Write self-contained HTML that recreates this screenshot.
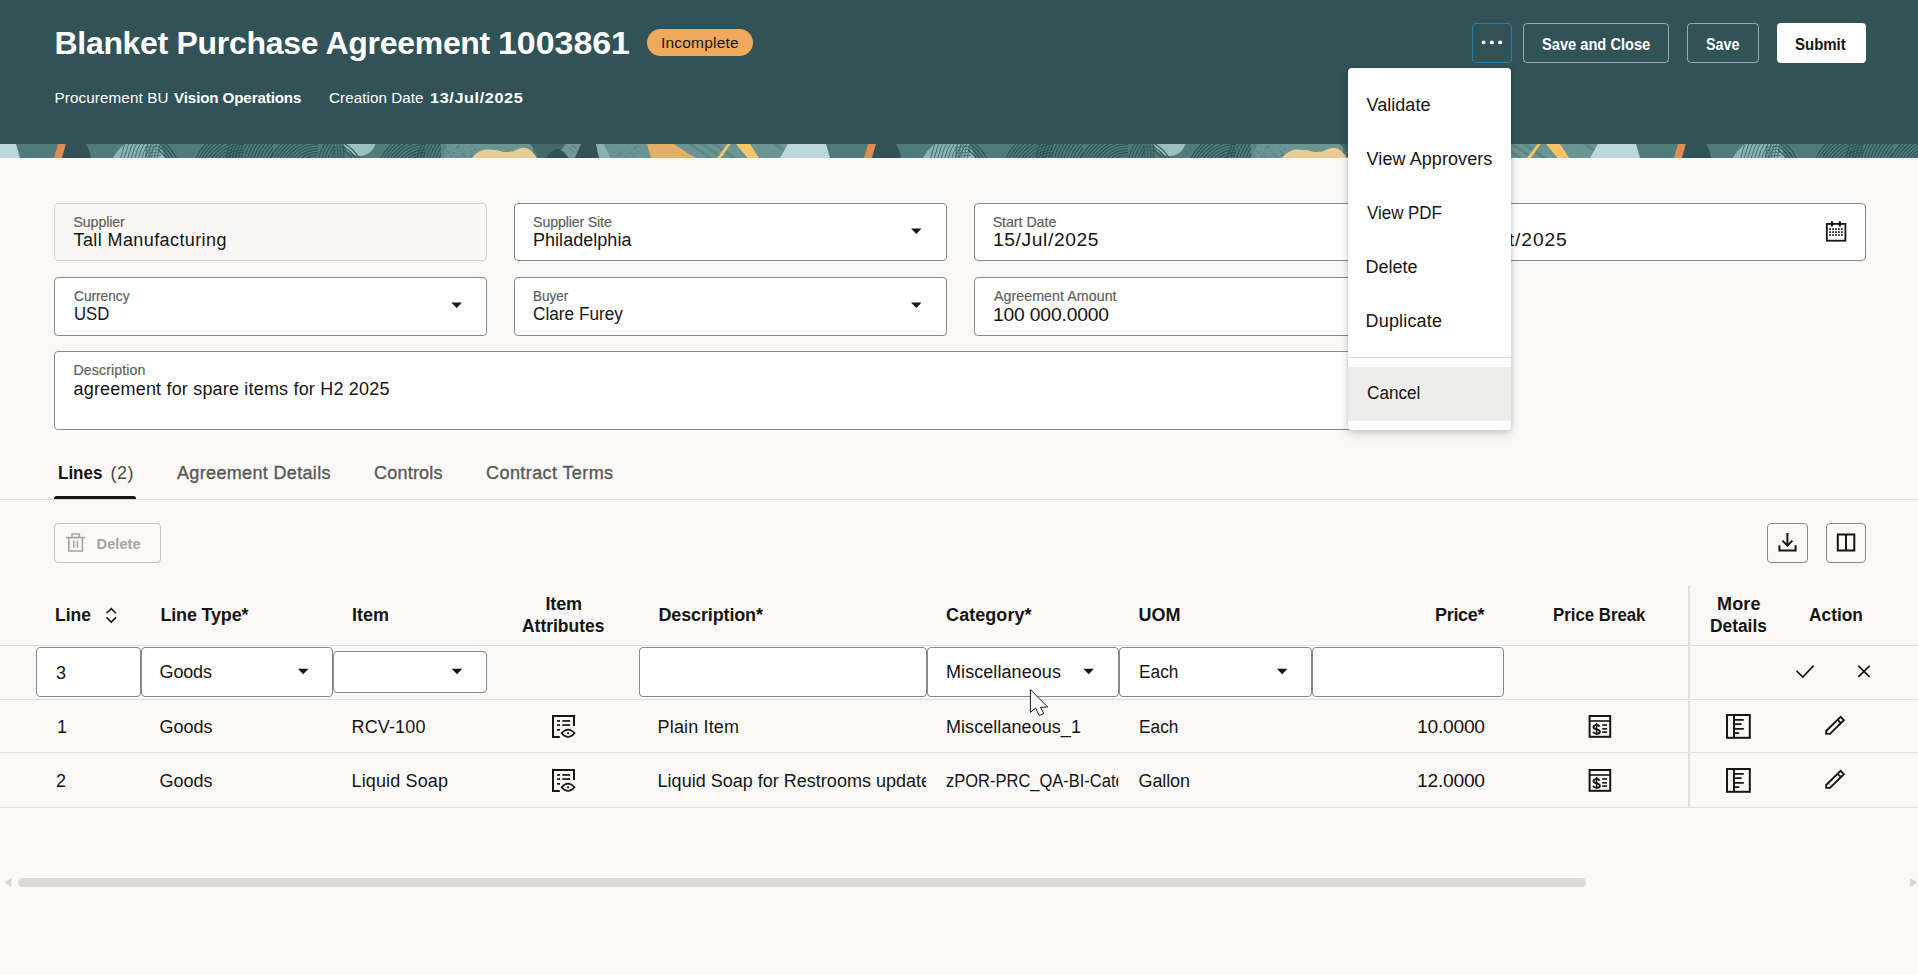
<!DOCTYPE html>
<html><head><meta charset="utf-8"><title>Blanket Purchase Agreement 1003861</title>
<style>

html,body{margin:0;padding:0;}
body{width:1918px;height:975px;overflow:hidden;background:#fbf9f8;font-family:"Liberation Sans",sans-serif;position:relative;color:#161513;}
.a{position:absolute;box-sizing:border-box;}
.t{position:absolute;white-space:nowrap;display:block;z-index:2;}
.hdr{left:0;top:0;width:1918px;height:144px;background:#315357;}
.strip{left:0;top:144px;width:1918px;height:14px;overflow:hidden;}
.fld{border:1px solid #8a8885;border-radius:4px;background:#ffffff;}
.fld.ro{border-color:#d6d4d1;background:#f9f8f6;}
.btn{border:1px solid #8a8885;border-radius:4px;}
.hl{height:1px;background:#dfddda;left:0;width:1918px;}
.menu{left:1347.5px;top:68px;width:163.5px;height:362px;background:#ffffff;border-radius:4px 4px 3px 3px;box-shadow:0 4px 10px rgba(0,0,0,0.18),0 0 4px rgba(0,0,0,0.10);z-index:5;}
svg{position:absolute;overflow:visible;}
svg.clip{overflow:hidden;}

</style></head>
<body>
<div class="a hdr"></div>
<svg class="a clip" style="left:0;top:144px" width="1918" height="14" viewBox="0 0 1918 14"><defs>
<clipPath id="cpA"><path d="M125 0 L160 0 L165 14 L113 14 Q117 6 125 0 Z"/></clipPath>
<clipPath id="cpB"><rect x="158" y="0" width="24" height="14"/></clipPath>
<clipPath id="cpC1"><rect x="190" y="0" width="53" height="14"/></clipPath>
<clipPath id="cpC2"><rect x="226" y="0" width="47" height="14"/></clipPath>
<clipPath id="cpD1"><rect x="265" y="0" width="53" height="14"/></clipPath>
<clipPath id="cpD2"><rect x="314" y="0" width="20" height="14"/></clipPath>
<clipPath id="cpE"><rect x="343" y="0" width="26" height="14"/></clipPath>
<clipPath id="cpF1"><rect x="379" y="0" width="46" height="14"/></clipPath>
<clipPath id="cpF2"><rect x="412" y="0" width="29" height="14"/></clipPath>
<clipPath id="cpG"><path d="M674 0 L788 0 L781 14 L696 14 Z"/></clipPath>
</defs><g id="tile"><rect x="0" y="0" width="810" height="14" fill="#517b7a"/>
<path d="M-22 0 L16 0 L20 14 L-30 14 Z" fill="#bdd6d9"/>
<path d="M58 0 L66 0 L62 14 L54 14 Z" fill="#e28b52"/>
<path d="M66 0 L86 0 Q90 6 91 14 L62 14 Z" fill="#315358"/>
<path d="M125 0 L160 0 L165 14 L113 14 Q117 6 125 0 Z" fill="#8db4b2"/>
<g fill="none" stroke="#356063" stroke-width="0.9" opacity="0.95" clip-path="url(#cpA)"><circle cx="187" cy="26" r="40.0"/><circle cx="187" cy="26" r="43.4"/><circle cx="187" cy="26" r="46.8"/><circle cx="187" cy="26" r="50.2"/><circle cx="187" cy="26" r="53.6"/><circle cx="187" cy="26" r="57.0"/><circle cx="187" cy="26" r="60.4"/><circle cx="187" cy="26" r="63.8"/><circle cx="187" cy="26" r="67.2"/></g>
<g fill="none" stroke="#356063" stroke-width="0.8" opacity="0.9"><path d="M147.7 0 L145.3 14"/><path d="M150.7 0 L148.3 14"/><path d="M153.7 0 L151.3 14"/><path d="M156.7 0 L154.3 14"/><path d="M159.7 0 L157.3 14"/><path d="M145 3.5 L161 2.0"/><path d="M145 6.5 L161 5.0"/><path d="M145 9.5 L161 8.0"/><path d="M145 12.5 L161 11.0"/></g>
<g fill="none" stroke="#2d5154" stroke-width="1.1" opacity="0.95" clip-path="url(#cpB)"><circle cx="140" cy="31" r="31.0"/><circle cx="140" cy="31" r="34.0"/><circle cx="140" cy="31" r="37.0"/><circle cx="140" cy="31" r="40.0"/></g>
<g fill="none" stroke="#2d5154" stroke-width="1.1" opacity="0.95" clip-path="url(#cpC1)"><circle cx="243" cy="36" r="22.0"/><circle cx="243" cy="36" r="24.7"/><circle cx="243" cy="36" r="27.4"/><circle cx="243" cy="36" r="30.1"/><circle cx="243" cy="36" r="32.8"/><circle cx="243" cy="36" r="35.5"/><circle cx="243" cy="36" r="38.2"/><circle cx="243" cy="36" r="40.9"/><circle cx="243" cy="36" r="43.6"/><circle cx="243" cy="36" r="46.3"/><circle cx="243" cy="36" r="49.0"/><circle cx="243" cy="36" r="51.7"/></g>
<g fill="none" stroke="#2d5154" stroke-width="1.1" opacity="0.95" clip-path="url(#cpC2)"><circle cx="300" cy="28" r="30.0"/><circle cx="300" cy="28" r="33.0"/><circle cx="300" cy="28" r="36.0"/><circle cx="300" cy="28" r="39.0"/><circle cx="300" cy="28" r="42.0"/><circle cx="300" cy="28" r="45.0"/><circle cx="300" cy="28" r="48.0"/><circle cx="300" cy="28" r="51.0"/><circle cx="300" cy="28" r="54.0"/><circle cx="300" cy="28" r="57.0"/><circle cx="300" cy="28" r="60.0"/><circle cx="300" cy="28" r="63.0"/><circle cx="300" cy="28" r="66.0"/><circle cx="300" cy="28" r="69.0"/><circle cx="300" cy="28" r="72.0"/><circle cx="300" cy="28" r="75.0"/></g>
<g fill="none" stroke="#2d5154" stroke-width="1.1" opacity="0.95" clip-path="url(#cpD1)"><circle cx="318" cy="36" r="22.0"/><circle cx="318" cy="36" r="24.7"/><circle cx="318" cy="36" r="27.4"/><circle cx="318" cy="36" r="30.1"/><circle cx="318" cy="36" r="32.8"/><circle cx="318" cy="36" r="35.5"/><circle cx="318" cy="36" r="38.2"/><circle cx="318" cy="36" r="40.9"/><circle cx="318" cy="36" r="43.6"/><circle cx="318" cy="36" r="46.3"/><circle cx="318" cy="36" r="49.0"/><circle cx="318" cy="36" r="51.7"/></g>
<g fill="none" stroke="#2d5154" stroke-width="1.1" opacity="0.95" clip-path="url(#cpD2)"><circle cx="372" cy="28" r="40.0"/><circle cx="372" cy="28" r="43.0"/><circle cx="372" cy="28" r="46.0"/><circle cx="372" cy="28" r="49.0"/><circle cx="372" cy="28" r="52.0"/><circle cx="372" cy="28" r="55.0"/></g>
<g fill="none" stroke="#2f5558" stroke-width="0.8" opacity="0.9"><path d="M334 0 L335 14"/><path d="M337 0 L338 14"/><path d="M340 0 L341 14"/><path d="M343 0 L344 14"/><path d="M332.5 3 L345 3"/><path d="M332.5 6.5 L345 6.5"/><path d="M332.5 10 L345 10"/><path d="M332.5 13 L345 13"/></g>
<circle cx="359.5" cy="-4.5" r="16.5" fill="#9bc0be"/>
<g fill="none" stroke="#2d5154" stroke-width="1.1" opacity="0.95" clip-path="url(#cpE)"><circle cx="326" cy="33" r="32.0"/><circle cx="326" cy="33" r="35.0"/><circle cx="326" cy="33" r="38.0"/></g>
<g fill="none" stroke="#2d5154" stroke-width="1.1" opacity="0.95" clip-path="url(#cpF1)"><circle cx="425" cy="36" r="22.0"/><circle cx="425" cy="36" r="24.7"/><circle cx="425" cy="36" r="27.4"/><circle cx="425" cy="36" r="30.1"/><circle cx="425" cy="36" r="32.8"/><circle cx="425" cy="36" r="35.5"/><circle cx="425" cy="36" r="38.2"/><circle cx="425" cy="36" r="40.9"/><circle cx="425" cy="36" r="43.6"/><circle cx="425" cy="36" r="46.3"/><circle cx="425" cy="36" r="49.0"/></g>
<g fill="none" stroke="#2d5154" stroke-width="1.1" opacity="0.95" clip-path="url(#cpF2)"><circle cx="480" cy="28" r="40.0"/><circle cx="480" cy="28" r="43.0"/><circle cx="480" cy="28" r="46.0"/><circle cx="480" cy="28" r="49.0"/><circle cx="480" cy="28" r="52.0"/><circle cx="480" cy="28" r="55.0"/><circle cx="480" cy="28" r="58.0"/><circle cx="480" cy="28" r="61.0"/><circle cx="480" cy="28" r="64.0"/></g>
<rect x="441" y="0" width="92" height="14" fill="#6a9593"/>
<path d="M441 0 L447 0 L443 14 L441 14Z" fill="#5c8988"/>
<g fill="#5a8684"><circle cx="450.6" cy="2.2" r="0.6"/><circle cx="448.0" cy="1.8" r="0.6"/><circle cx="472.4" cy="10.6" r="0.9"/><circle cx="450.1" cy="7.4" r="0.6"/><circle cx="448.5" cy="2.3" r="0.5"/><circle cx="472.7" cy="10.9" r="0.9"/><circle cx="468.6" cy="3.3" r="0.6"/><circle cx="463.1" cy="9.8" r="0.9"/><circle cx="471.2" cy="2.0" r="0.8"/><circle cx="464.5" cy="7.1" r="0.5"/><circle cx="458.2" cy="2.1" r="1.0"/><circle cx="470.7" cy="7.6" r="0.6"/><circle cx="472.1" cy="7.9" r="0.9"/><circle cx="470.1" cy="7.1" r="0.6"/><circle cx="462.2" cy="6.2" r="0.5"/><circle cx="452.8" cy="10.8" r="0.4"/><circle cx="444.5" cy="8.5" r="0.6"/><circle cx="460.1" cy="6.7" r="0.6"/><circle cx="474.9" cy="3.3" r="0.6"/><circle cx="449.5" cy="8.6" r="0.6"/><circle cx="454.4" cy="10.0" r="0.6"/><circle cx="460.9" cy="11.9" r="0.5"/><circle cx="445.0" cy="3.7" r="0.9"/><circle cx="462.7" cy="3.8" r="0.6"/><circle cx="448.7" cy="6.5" r="0.4"/><circle cx="465.3" cy="11.8" r="1.0"/><circle cx="466.5" cy="12.5" r="0.4"/><circle cx="452.2" cy="12.6" r="0.9"/><circle cx="456.1" cy="12.3" r="0.8"/><circle cx="469.2" cy="4.5" r="0.5"/><circle cx="457.2" cy="2.6" r="0.6"/><circle cx="473.8" cy="5.0" r="0.4"/><circle cx="444.4" cy="3.0" r="0.9"/><circle cx="454.6" cy="4.5" r="0.5"/><circle cx="474.4" cy="6.1" r="0.5"/><circle cx="444.9" cy="1.7" r="0.5"/><circle cx="464.7" cy="2.8" r="0.4"/><circle cx="458.7" cy="4.0" r="1.0"/><circle cx="446.9" cy="7.4" r="0.9"/><circle cx="456.1" cy="12.9" r="0.7"/><circle cx="450.7" cy="5.9" r="0.4"/><circle cx="456.5" cy="4.0" r="0.9"/><circle cx="469.6" cy="7.0" r="0.4"/><circle cx="451.1" cy="3.9" r="0.5"/><circle cx="450.4" cy="11.4" r="0.5"/><circle cx="444.6" cy="12.1" r="0.7"/><circle cx="474.7" cy="5.8" r="0.9"/><circle cx="463.9" cy="10.5" r="0.8"/><circle cx="458.8" cy="2.1" r="0.5"/><circle cx="471.0" cy="11.8" r="1.0"/><circle cx="453.8" cy="8.9" r="0.9"/><circle cx="463.6" cy="10.8" r="0.7"/><circle cx="464.0" cy="9.2" r="0.6"/><circle cx="472.5" cy="12.5" r="0.4"/><circle cx="474.1" cy="12.5" r="0.8"/><circle cx="444.4" cy="11.8" r="0.5"/><circle cx="474.0" cy="9.0" r="0.4"/><circle cx="448.4" cy="8.6" r="0.7"/><circle cx="466.9" cy="12.1" r="0.5"/><circle cx="443.1" cy="12.1" r="0.4"/></g>
<path d="M472 14 Q478 6.5 486 5.6 Q496 5.4 504 8 Q512 8.6 516 6 Q521 3.4 525 3.8 Q531 5 537 14 Z" fill="#ebcb95"/>
<path d="M530 0 L566 0 Q560 10 545 14 L538 14 Q536 6 530 0Z" fill="#416968"/>
<path d="M546 14 Q552 5 557.5 5 Q562 5 569 14 Z" fill="#315358"/>
<path d="M566 0 L581 0 L575 14 L569 14 Q563 5.5 560.5 6.5 Q564 3 566 0Z" fill="#6f9896"/>
<path d="M571 1 L576 4 M569 4 L574 8" stroke="#5c8886" stroke-width="1.6" fill="none"/>
<path d="M581 0 L596 0 L599 14 L575 14 Z" fill="#315358"/>
<path d="M596 0 L604 0 L611 14 L599 14 Z" fill="#88b1af"/>
<path d="M604 0 L647 0 L651 14 L611 14 Z" fill="#6a9593"/>
<g fill="#5b8786"><circle cx="636.3" cy="2.4" r="0.8"/><circle cx="633.5" cy="11.5" r="0.7"/><circle cx="636.4" cy="3.4" r="0.7"/><circle cx="619.9" cy="11.7" r="0.8"/><circle cx="624.1" cy="7.3" r="0.4"/><circle cx="611.0" cy="8.1" r="0.6"/><circle cx="635.9" cy="8.3" r="0.5"/><circle cx="620.9" cy="10.2" r="0.7"/><circle cx="610.3" cy="11.1" r="0.8"/><circle cx="612.6" cy="7.5" r="0.6"/><circle cx="633.6" cy="4.7" r="0.5"/><circle cx="624.6" cy="12.6" r="0.4"/><circle cx="613.4" cy="8.5" r="0.8"/><circle cx="625.4" cy="6.2" r="0.8"/><circle cx="633.3" cy="1.8" r="0.8"/><circle cx="615.9" cy="4.6" r="0.8"/><circle cx="622.7" cy="10.6" r="0.5"/><circle cx="636.2" cy="3.1" r="0.5"/><circle cx="624.8" cy="5.1" r="0.7"/><circle cx="637.1" cy="9.5" r="0.4"/><circle cx="619.4" cy="7.5" r="0.6"/><circle cx="631.5" cy="6.8" r="0.4"/><circle cx="617.4" cy="11.2" r="0.6"/><circle cx="633.0" cy="12.8" r="0.7"/><circle cx="630.3" cy="8.3" r="0.6"/><circle cx="637.4" cy="6.6" r="0.9"/><circle cx="619.2" cy="11.4" r="0.8"/><circle cx="628.4" cy="6.3" r="0.5"/><circle cx="633.1" cy="5.3" r="0.7"/><circle cx="614.0" cy="2.0" r="0.5"/><circle cx="634.3" cy="3.1" r="0.9"/><circle cx="621.2" cy="7.9" r="0.6"/><circle cx="628.6" cy="2.1" r="0.6"/><circle cx="638.1" cy="3.2" r="0.7"/><circle cx="619.8" cy="4.6" r="0.4"/><circle cx="610.6" cy="12.4" r="0.8"/><circle cx="634.0" cy="10.7" r="0.9"/><circle cx="614.8" cy="8.0" r="0.6"/><circle cx="627.2" cy="12.3" r="0.8"/><circle cx="639.1" cy="2.4" r="0.7"/><circle cx="630.3" cy="9.9" r="0.7"/><circle cx="634.9" cy="4.6" r="0.9"/><circle cx="622.2" cy="8.2" r="0.8"/><circle cx="631.1" cy="4.7" r="0.5"/><circle cx="619.8" cy="8.5" r="0.9"/><circle cx="637.0" cy="5.8" r="0.6"/><circle cx="634.5" cy="4.4" r="0.6"/><circle cx="610.4" cy="3.2" r="0.7"/><circle cx="630.8" cy="8.4" r="0.6"/><circle cx="638.5" cy="8.5" r="0.5"/></g>
<path d="M647 0 L674 0 L696 14 L651 14 Z" fill="#e2b065"/>
<path d="M674 0 L788 0 L781 14 L696 14 Z" fill="#6a9593"/>
<g fill="#5a8785" clip-path="url(#cpG)"><path d="M688 0 L708 14 L713 14 L693 0Z"/><path d="M700 0 L720 14 L725 14 L705 0Z"/><path d="M712 0 L732 14 L737 14 L717 0Z"/><path d="M735 0 L755 14 L760 14 L740 0Z"/><path d="M772 0 L792 14 L797 14 L777 0Z"/></g>
<path d="M727.5 0 L730.6 0 L721 14 L717 14 Z" fill="#f5c567"/>
<path d="M736 0 L750 0 L759 14 L747.5 14 Z" fill="#f5c567"/>
<path d="M788 0 L826 0 L830 14 L780.6 14 Z" fill="#bdd6d9"/></g><use href="#tile" x="810"/><use href="#tile" x="1620"/></svg>
<div class="a" style="left:647px;top:29px;width:105.5px;height:27px;border-radius:14px;background:#f0a95b;"></div>
<div class="a" style="left:1472px;top:23px;width:40px;height:40px;border:1px solid #2a7fb0;border-radius:4px;"></div>
<svg class="a" style="left:0;top:0" width="1" height="1"><g fill="#ffffff"><circle cx="1483.6" cy="42.4" r="1.95"/><circle cx="1491.9" cy="42.4" r="1.95"/><circle cx="1500.1" cy="42.4" r="1.95"/></g></svg>
<div class="a" style="left:1523px;top:23px;width:146px;height:40px;border:1px solid rgba(255,255,255,0.5);border-radius:4px;"></div>
<div class="a" style="left:1687px;top:23px;width:72px;height:40px;border:1px solid rgba(255,255,255,0.5);border-radius:4px;"></div>
<div class="a" style="left:1777px;top:23px;width:89px;height:40px;background:#ffffff;border-radius:4px;"></div>
<div class="a fld ro" style="left:54px;top:203px;width:433px;height:58px;"></div>
<div class="a fld" style="left:514px;top:203px;width:433px;height:58px;"></div>
<div class="a fld" style="left:974px;top:203px;width:433px;height:58px;"></div>
<div class="a fld" style="left:1434px;top:203px;width:432px;height:58px;"></div>
<div class="a fld" style="left:54px;top:277px;width:433px;height:59px;"></div>
<div class="a fld" style="left:514px;top:277px;width:433px;height:59px;"></div>
<div class="a fld" style="left:974px;top:277px;width:433px;height:59px;"></div>
<div class="a fld" style="left:54px;top:351px;width:1353px;height:79px;"></div>
<svg class="a" style="left:0;top:0;z-index:2" width="1" height="1"><path d="M451.30 302.50 L461.90 302.50 L456.60 307.90 Z" fill="#161513"/></svg>
<svg class="a" style="left:0;top:0;z-index:2" width="1" height="1"><path d="M911.00 302.50 L921.60 302.50 L916.30 307.90 Z" fill="#161513"/></svg>
<svg class="a" style="left:0;top:0;z-index:2" width="1" height="1"><path d="M911.00 228.50 L921.60 228.50 L916.30 233.90 Z" fill="#161513"/></svg>
<svg class="a" style="left:0;top:0;z-index:2" width="1" height="1"><rect x="1826.8" y="223.9" width="18.6" height="16.8" fill="none" stroke="#161513" stroke-width="1.8"/><path d="M1832 221.2 V226.4 M1839.8 221.2 V226.4" stroke="#161513" stroke-width="2.2" fill="none"/><rect x="1829.25" y="228.25" width="1.7" height="1.7" fill="#161513"/><rect x="1829.25" y="231.25" width="1.7" height="1.7" fill="#161513"/><rect x="1829.25" y="234.15" width="1.7" height="1.7" fill="#161513"/><rect x="1832.20" y="228.25" width="1.7" height="1.7" fill="#161513"/><rect x="1832.20" y="231.25" width="1.7" height="1.7" fill="#161513"/><rect x="1832.20" y="234.15" width="1.7" height="1.7" fill="#161513"/><rect x="1835.10" y="228.25" width="1.7" height="1.7" fill="#161513"/><rect x="1835.10" y="231.25" width="1.7" height="1.7" fill="#161513"/><rect x="1835.10" y="234.15" width="1.7" height="1.7" fill="#161513"/><rect x="1838.05" y="228.25" width="1.7" height="1.7" fill="#161513"/><rect x="1838.05" y="231.25" width="1.7" height="1.7" fill="#161513"/><rect x="1838.05" y="234.15" width="1.7" height="1.7" fill="#161513"/><rect x="1840.95" y="228.25" width="1.7" height="1.7" fill="#161513"/><rect x="1840.95" y="231.25" width="1.7" height="1.7" fill="#161513"/><rect x="1840.95" y="234.15" width="1.7" height="1.7" fill="#161513"/></svg>
<div class="a menu"><div class="a" style="left:0;top:289px;width:163.5px;height:1px;background:#dcdad7;"></div><div class="a" style="left:0;top:299px;width:163.5px;height:54px;background:#ededec;"></div></div>
<div class="a hl" style="top:499px;background:#d9d7d4;"></div>
<div class="a" style="left:54px;top:496px;width:82px;height:3px;background:#161513;border-radius:2.5px 2.5px 0 0;"></div>
<div class="a btn" style="left:54px;top:523px;width:107px;height:40px;border-color:#c5c3c0;"></div>
<svg class="a" style="left:0;top:0" width="1" height="1"><g fill="none" stroke="#a5a3a0" stroke-width="1.6"><path d="M66 537.6 H85"/><path d="M72 537.4 V534 H79.3 V537.4"/><path d="M68.8 538 V551 H82.4 V538"/><path d="M73.8 540.4 V547.8 M77.4 540.4 V547.8"/></g></svg>
<div class="a btn" style="left:1767px;top:523px;width:41px;height:40px;"></div>
<div class="a btn" style="left:1826px;top:523px;width:40px;height:40px;"></div>
<svg class="a" style="left:0;top:0" width="1" height="1"><g fill="none" stroke="#161513" stroke-width="2"><path d="M1787.4 533 V545.4"/><path d="M1782.4 540.6 L1787.4 545.6 L1792.4 540.6"/><path d="M1779.4 545.2 V550.4 H1795.6 V545.2"/><rect x="1837.8" y="534.5" width="16.5" height="16"/><path d="M1846 534.5 V550.5"/></g></svg>
<div class="a hl" style="top:645px;"></div>
<div class="a hl" style="top:699px;"></div>
<div class="a hl" style="top:752px;"></div>
<div class="a hl" style="top:807px;"></div>
<div class="a" style="left:1688px;top:586px;width:2px;height:221px;background:#e2e0dd;"></div>
<svg class="a" style="left:0;top:0" width="1" height="1"><g fill="none" stroke="#161513" stroke-width="1.5"><path d="M106.5 613.3 L111.3 608.6 L116.1 613.3"/><path d="M106.5 617.4 L111.3 622.1 L116.1 617.4"/></g></svg>
<div class="a fld" style="left:36px;top:647px;width:105px;height:50px;"></div>
<div class="a fld" style="left:141px;top:647px;width:192px;height:50px;"></div>
<div class="a fld" style="left:333px;top:651px;width:154px;height:42px;"></div>
<div class="a fld" style="left:639px;top:647px;width:288px;height:50px;"></div>
<div class="a fld" style="left:927px;top:647px;width:192px;height:50px;"></div>
<div class="a fld" style="left:1119px;top:647px;width:193px;height:50px;"></div>
<div class="a fld" style="left:1312px;top:647px;width:192px;height:50px;"></div>
<svg class="a" style="left:0;top:0;z-index:2" width="1" height="1"><path d="M297.90 668.80 L308.50 668.80 L303.20 674.20 Z" fill="#161513"/></svg>
<svg class="a" style="left:0;top:0;z-index:2" width="1" height="1"><path d="M451.70 668.80 L462.30 668.80 L457.00 674.20 Z" fill="#161513"/></svg>
<svg class="a" style="left:0;top:0;z-index:2" width="1" height="1"><path d="M1083.40 668.80 L1094.00 668.80 L1088.70 674.20 Z" fill="#161513"/></svg>
<svg class="a" style="left:0;top:0;z-index:2" width="1" height="1"><path d="M1276.90 668.80 L1287.50 668.80 L1282.20 674.20 Z" fill="#161513"/></svg>
<svg class="a" style="left:0;top:0" width="1" height="1"><g fill="none" stroke="#161513" stroke-width="1.7"><path d="M1796.5 670.8 L1802.8 677 L1813.6 665.7"/><path d="M1858.3 665.9 L1869.6 676.9 M1869.6 665.9 L1858.3 676.9"/></g></svg>
<svg class="a" style="left:0;top:0" width="1" height="1"><g transform="translate(0,0)"><path d="M559.8 737 H553 V716 H574 V726" fill="none" stroke="#161513" stroke-width="2"/><g fill="#161513"><rect x="557" y="720.1" width="3" height="1.7"/><rect x="557" y="724.2" width="3" height="1.7"/><rect x="557" y="729" width="3" height="1.7"/><rect x="562.3" y="720.1" width="7.8" height="1.7"/><rect x="562.3" y="724.2" width="7.8" height="1.7"/></g><path d="M561.6 733.3 Q568 726 574.6 733.3 Q568 740.6 561.6 733.3 Z" fill="none" stroke="#161513" stroke-width="1.6"/><circle cx="568.1" cy="733.3" r="1.1" fill="#161513"/></g></svg>
<svg class="a" style="left:0;top:0" width="1" height="1"><g transform="translate(0,0)"><rect x="1589.6" y="716" width="20.6" height="20.8" fill="none" stroke="#161513" stroke-width="2"/><path d="M1589.6 721 H1610.2" stroke="#161513" stroke-width="1.6" fill="none"/><g fill="#161513"><rect x="1602.2" y="724.2" width="4.9" height="1.6"/><rect x="1602.2" y="728" width="4.9" height="1.6"/><rect x="1602.2" y="731.3" width="4.9" height="1.6"/></g><path d="M1599.7 726.7 C1598.6 724.5 1593.5 724.4 1593.5 727.2 C1593.5 730 1599.9 728.7 1599.9 731.7 C1599.9 734.4 1594.3 734.3 1593.1 731.9" fill="none" stroke="#161513" stroke-width="1.9"/><path d="M1596.6 722.9 V734.7" fill="none" stroke="#161513" stroke-width="1.5"/></g></svg>
<svg class="a" style="left:0;top:0" width="1" height="1"><g transform="translate(0,0)" fill="none" stroke="#161513" stroke-width="2"><rect x="1727" y="715" width="22.8" height="22.8"/><path d="M1734 715 V737.8"/><path d="M1735 719.8 H1743.8 M1735 724.1 H1741.6 M1735 728.8 H1743.8 M1735 733.1 H1739.2" stroke-width="1.8"/></g></svg>
<svg class="a" style="left:0;top:0" width="1" height="1"><g transform="translate(0,0)" fill="none" stroke="#161513" stroke-width="1.85" stroke-linejoin="miter"><path d="M1826.2 733.8 L1826.2 731.0 L1840.6 716.9 L1843.9 720.2 L1830.0 733.8 Z"/><path d="M1837.7 719.9 L1840.9 723.1"/></g></svg>
<svg class="a" style="left:0;top:0" width="1" height="1"><g transform="translate(0,54)"><path d="M559.8 737 H553 V716 H574 V726" fill="none" stroke="#161513" stroke-width="2"/><g fill="#161513"><rect x="557" y="720.1" width="3" height="1.7"/><rect x="557" y="724.2" width="3" height="1.7"/><rect x="557" y="729" width="3" height="1.7"/><rect x="562.3" y="720.1" width="7.8" height="1.7"/><rect x="562.3" y="724.2" width="7.8" height="1.7"/></g><path d="M561.6 733.3 Q568 726 574.6 733.3 Q568 740.6 561.6 733.3 Z" fill="none" stroke="#161513" stroke-width="1.6"/><circle cx="568.1" cy="733.3" r="1.1" fill="#161513"/></g></svg>
<svg class="a" style="left:0;top:0" width="1" height="1"><g transform="translate(0,54)"><rect x="1589.6" y="716" width="20.6" height="20.8" fill="none" stroke="#161513" stroke-width="2"/><path d="M1589.6 721 H1610.2" stroke="#161513" stroke-width="1.6" fill="none"/><g fill="#161513"><rect x="1602.2" y="724.2" width="4.9" height="1.6"/><rect x="1602.2" y="728" width="4.9" height="1.6"/><rect x="1602.2" y="731.3" width="4.9" height="1.6"/></g><path d="M1599.7 726.7 C1598.6 724.5 1593.5 724.4 1593.5 727.2 C1593.5 730 1599.9 728.7 1599.9 731.7 C1599.9 734.4 1594.3 734.3 1593.1 731.9" fill="none" stroke="#161513" stroke-width="1.9"/><path d="M1596.6 722.9 V734.7" fill="none" stroke="#161513" stroke-width="1.5"/></g></svg>
<svg class="a" style="left:0;top:0" width="1" height="1"><g transform="translate(0,54)" fill="none" stroke="#161513" stroke-width="2"><rect x="1727" y="715" width="22.8" height="22.8"/><path d="M1734 715 V737.8"/><path d="M1735 719.8 H1743.8 M1735 724.1 H1741.6 M1735 728.8 H1743.8 M1735 733.1 H1739.2" stroke-width="1.8"/></g></svg>
<svg class="a" style="left:0;top:0" width="1" height="1"><g transform="translate(0,54)" fill="none" stroke="#161513" stroke-width="1.85" stroke-linejoin="miter"><path d="M1826.2 733.8 L1826.2 731.0 L1840.6 716.9 L1843.9 720.2 L1830.0 733.8 Z"/><path d="M1837.7 719.9 L1840.9 723.1"/></g></svg>
<div class="a" style="left:18px;top:878px;width:1567.5px;height:9px;border-radius:4.5px;background:#dcdbd9;"></div>
<svg class="a" style="left:0;top:0" width="1" height="1"><g fill="#d6d5d3" stroke="#d6d5d3" stroke-width="1" stroke-linejoin="round"><path d="M5.2 882.5 L11 878.8 L11 886.2 Z"/><path d="M1916.6 882.5 L1910.4 878.8 L1910.4 886.2 Z"/></g></svg>
<div id="texts">
<span class="t" id="t0" style="left:54.50px;top:23.00px;font-size:32px;line-height:40.0px;color:#ffffff;font-weight:700;letter-spacing:-0.306px;">Blanket Purchase Agreement</span>
<span class="t" id="t1" style="left:498.40px;top:23.00px;font-size:32px;line-height:40.0px;color:#ffffff;font-weight:700;letter-spacing:-0.016px;transform:scaleX(1.0600);transform-origin:0 0;">1003861</span>
<span class="t" id="t2" style="left:661.00px;top:33.00px;font-size:15.5px;line-height:19.38px;color:#161513;letter-spacing:0.198px;">Incomplete</span>
<span class="t" id="t3" style="left:54.46px;top:88.00px;font-size:15.2px;line-height:19.0px;color:#ffffff;letter-spacing:0.134px;">Procurement BU</span>
<span class="t" id="t4" style="left:174.04px;top:88.00px;font-size:15.2px;line-height:19.0px;color:#ffffff;font-weight:700;letter-spacing:-0.142px;">Vision Operations</span>
<span class="t" id="t5" style="left:329.08px;top:88.00px;font-size:15.2px;line-height:19.0px;color:#ffffff;letter-spacing:0.052px;">Creation Date</span>
<span class="t" id="t6" style="left:429.56px;top:88.00px;font-size:15.2px;line-height:19.0px;color:#ffffff;font-weight:700;letter-spacing:0.558px;transform:scaleX(1.0700);transform-origin:0 0;">13/Jul/2025</span>
<span class="t" id="t7" style="left:1542.10px;top:35.00px;font-size:16px;line-height:20.0px;color:#ffffff;font-weight:700;transform:scaleX(0.9153);transform-origin:0 0;">Save and Close</span>
<span class="t" id="t8" style="left:1706.10px;top:35.00px;font-size:16px;line-height:20.0px;color:#ffffff;font-weight:700;transform:scaleX(0.8923);transform-origin:0 0;">Save</span>
<span class="t" id="t9" style="left:1795.16px;top:35.00px;font-size:16px;line-height:20.0px;color:#161513;font-weight:700;transform:scaleX(0.9360);transform-origin:0 0;">Submit</span>
<span class="t" id="t10" style="left:73.56px;top:214.00px;font-size:14.2px;line-height:17.75px;color:#615f5c;letter-spacing:-0.138px;-webkit-text-stroke:0.2px #615f5c;">Supplier</span>
<span class="t" id="t11" style="left:73.56px;top:229.00px;font-size:18px;line-height:22.5px;color:#161513;letter-spacing:0.399px;">Tall Manufacturing</span>
<span class="t" id="t12" style="left:533.10px;top:214.00px;font-size:14.2px;line-height:17.75px;color:#615f5c;letter-spacing:-0.146px;-webkit-text-stroke:0.2px #615f5c;">Supplier Site</span>
<span class="t" id="t13" style="left:533.00px;top:229.00px;font-size:18px;line-height:22.5px;color:#161513;letter-spacing:0.031px;">Philadelphia</span>
<span class="t" id="t14" style="left:992.64px;top:214.00px;font-size:14.2px;line-height:17.75px;color:#615f5c;letter-spacing:-0.025px;-webkit-text-stroke:0.2px #615f5c;">Start Date</span>
<span class="t" id="t15" style="left:992.93px;top:229.00px;font-size:18px;line-height:22.5px;color:#161513;letter-spacing:0.554px;transform:scaleX(1.0700);transform-origin:0 0;">15/Jul/2025</span>
<span class="t" id="t16" style="left:1452.62px;top:214.00px;font-size:14.2px;line-height:17.75px;color:#615f5c;-webkit-text-stroke:0.2px #615f5c;transform:scaleX(0.9264);transform-origin:0 0;">End Date</span>
<span class="t" id="t17" style="left:1453.10px;top:229.00px;font-size:18px;line-height:22.5px;color:#161513;letter-spacing:0.830px;transform:scaleX(1.0700);transform-origin:0 0;">31/Oct/2025</span>
<span class="t" id="t18" style="left:73.56px;top:288.00px;font-size:14.2px;line-height:17.75px;color:#615f5c;-webkit-text-stroke:0.2px #615f5c;transform:scaleX(0.9650);transform-origin:0 0;">Currency</span>
<span class="t" id="t19" style="left:73.55px;top:303.00px;font-size:18px;line-height:22.5px;color:#161513;transform:scaleX(0.9308);transform-origin:0 0;">USD</span>
<span class="t" id="t20" style="left:533.05px;top:288.00px;font-size:14.2px;line-height:17.75px;color:#615f5c;-webkit-text-stroke:0.2px #615f5c;transform:scaleX(0.9498);transform-origin:0 0;">Buyer</span>
<span class="t" id="t21" style="left:533.10px;top:303.00px;font-size:18px;line-height:22.5px;color:#161513;transform:scaleX(0.9564);transform-origin:0 0;">Clare Furey</span>
<span class="t" id="t22" style="left:994.00px;top:288.00px;font-size:14.2px;line-height:17.75px;color:#615f5c;letter-spacing:0.074px;-webkit-text-stroke:0.2px #615f5c;">Agreement Amount</span>
<span class="t" id="t23" style="left:992.93px;top:304.00px;font-size:18px;line-height:22.5px;color:#161513;letter-spacing:-0.155px;transform:scaleX(1.0700);transform-origin:0 0;">100 000.0000</span>
<span class="t" id="t24" style="left:73.46px;top:362.00px;font-size:14.2px;line-height:17.75px;color:#615f5c;letter-spacing:0.097px;-webkit-text-stroke:0.2px #615f5c;">Description</span>
<span class="t" id="t25" style="left:73.56px;top:378.00px;font-size:18px;line-height:22.5px;color:#161513;letter-spacing:0.186px;">agreement for spare items for H2 2025</span>
<span class="t" id="t26" style="left:1366.58px;top:94.00px;font-size:18px;line-height:22.5px;color:#161513;z-index:6;letter-spacing:0.017px;">Validate</span>
<span class="t" id="t27" style="left:1366.58px;top:148.00px;font-size:18px;line-height:22.5px;color:#161513;z-index:6;letter-spacing:0.076px;">View Approvers</span>
<span class="t" id="t28" style="left:1367.48px;top:202.00px;font-size:18px;line-height:22.5px;color:#161513;z-index:6;transform:scaleX(0.9402);transform-origin:0 0;">View PDF</span>
<span class="t" id="t29" style="left:1365.58px;top:256.00px;font-size:18px;line-height:22.5px;color:#161513;z-index:6;letter-spacing:-0.040px;">Delete</span>
<span class="t" id="t30" style="left:1365.58px;top:310.00px;font-size:18px;line-height:22.5px;color:#161513;z-index:6;letter-spacing:0.161px;">Duplicate</span>
<span class="t" id="t31" style="left:1366.58px;top:382.00px;font-size:18px;line-height:22.5px;color:#161513;z-index:6;transform:scaleX(0.9528);transform-origin:0 0;">Cancel</span>
<span class="t" id="t32" style="left:57.55px;top:462.00px;font-size:18px;line-height:22.5px;color:#161513;font-weight:700;transform:scaleX(0.9442);transform-origin:0 0;">Lines</span>
<span class="t" id="t33" style="left:110.54px;top:462.00px;font-size:18px;line-height:22.5px;color:#4a4845;letter-spacing:0.468px;">(2)</span>
<span class="t" id="t34" style="left:177.00px;top:462.00px;font-size:18px;line-height:22.5px;color:#5a5855;letter-spacing:0.339px;-webkit-text-stroke:0.35px #5a5855;">Agreement Details</span>
<span class="t" id="t35" style="left:374.08px;top:462.00px;font-size:18px;line-height:22.5px;color:#5a5855;letter-spacing:0.198px;-webkit-text-stroke:0.35px #5a5855;">Controls</span>
<span class="t" id="t36" style="left:486.08px;top:462.00px;font-size:18px;line-height:22.5px;color:#5a5855;letter-spacing:0.407px;-webkit-text-stroke:0.35px #5a5855;">Contract Terms</span>
<span class="t" id="t37" style="left:96.60px;top:535.00px;font-size:14.6px;line-height:18.25px;color:#a5a3a0;font-weight:700;letter-spacing:0.043px;">Delete</span>
<span class="t" id="t38" style="left:55.10px;top:604.00px;font-size:18px;line-height:22.5px;color:#161513;font-weight:700;transform:scaleX(0.9704);transform-origin:0 0;">Line</span>
<span class="t" id="t39" style="left:160.48px;top:604.00px;font-size:18px;line-height:22.5px;color:#161513;font-weight:700;letter-spacing:-0.184px;">Line Type*</span>
<span class="t" id="t40" style="left:352.02px;top:604.00px;font-size:18px;line-height:22.5px;color:#161513;font-weight:700;letter-spacing:0.011px;">Item</span>
<span class="t" id="t41" style="left:545.46px;top:593.00px;font-size:18px;line-height:22.5px;color:#161513;font-weight:700;letter-spacing:-0.149px;">Item</span>
<span class="t" id="t42" style="left:522.16px;top:615.00px;font-size:18px;line-height:22.5px;color:#161513;font-weight:700;transform:scaleX(0.9692);transform-origin:0 0;">Attributes</span>
<span class="t" id="t43" style="left:658.48px;top:604.00px;font-size:18px;line-height:22.5px;color:#161513;font-weight:700;letter-spacing:-0.138px;">Description*</span>
<span class="t" id="t44" style="left:946.10px;top:604.00px;font-size:18px;line-height:22.5px;color:#161513;font-weight:700;letter-spacing:0.048px;">Category*</span>
<span class="t" id="t45" style="left:1138.48px;top:604.00px;font-size:18px;line-height:22.5px;color:#161513;font-weight:700;letter-spacing:0.010px;">UOM</span>
<span class="t" id="t46" style="left:1435.02px;top:604.00px;font-size:18px;line-height:22.5px;color:#161513;font-weight:700;letter-spacing:-0.311px;">Price*</span>
<span class="t" id="t47" style="left:1552.61px;top:604.00px;font-size:18px;line-height:22.5px;color:#161513;font-weight:700;transform:scaleX(0.9333);transform-origin:0 0;">Price Break</span>
<span class="t" id="t48" style="left:1717.00px;top:593.00px;font-size:18px;line-height:22.5px;color:#161513;font-weight:700;letter-spacing:0.135px;">More</span>
<span class="t" id="t49" style="left:1710.03px;top:615.00px;font-size:18px;line-height:22.5px;color:#161513;font-weight:700;transform:scaleX(0.9639);transform-origin:0 0;">Details</span>
<span class="t" id="t50" style="left:1808.58px;top:604.00px;font-size:18px;line-height:22.5px;color:#161513;font-weight:700;transform:scaleX(0.9627);transform-origin:0 0;">Action</span>
<span class="t" id="t51" style="left:56.08px;top:662.00px;font-size:18px;line-height:22.5px;color:#161513;">3</span>
<span class="t" id="t52" style="left:159.62px;top:661.00px;font-size:18px;line-height:22.5px;color:#161513;letter-spacing:-0.176px;">Goods</span>
<span class="t" id="t53" style="left:946.00px;top:661.00px;font-size:18px;line-height:22.5px;color:#161513;letter-spacing:0.072px;">Miscellaneous</span>
<span class="t" id="t54" style="left:1138.53px;top:661.00px;font-size:18px;line-height:22.5px;color:#161513;transform:scaleX(0.9600);transform-origin:0 0;">Each</span>
<span class="t" id="t55" style="left:57.00px;top:716.00px;font-size:18px;line-height:22.5px;color:#161513;">1</span>
<span class="t" id="t56" style="left:159.62px;top:716.00px;font-size:18px;line-height:22.5px;color:#161513;letter-spacing:-0.063px;">Goods</span>
<span class="t" id="t57" style="left:351.52px;top:716.00px;font-size:18px;line-height:22.5px;color:#161513;letter-spacing:0.142px;">RCV-100</span>
<span class="t" id="t58" style="left:657.58px;top:716.00px;font-size:18px;line-height:22.5px;color:#161513;letter-spacing:0.151px;">Plain Item</span>
<span class="t" id="t59" style="left:946.00px;top:716.00px;font-size:18px;line-height:22.5px;color:#161513;letter-spacing:0.062px;">Miscellaneous_1</span>
<span class="t" id="t60" style="left:1138.53px;top:716.00px;font-size:18px;line-height:22.5px;color:#161513;transform:scaleX(0.9600);transform-origin:0 0;">Each</span>
<span class="t" id="t61" style="left:1417.45px;top:716.00px;font-size:18px;line-height:22.5px;color:#161513;letter-spacing:-0.243px;transform:scaleX(1.0700);transform-origin:0 0;">10.0000</span>
<span class="t" id="t62" style="left:56.10px;top:770.00px;font-size:18px;line-height:22.5px;color:#161513;">2</span>
<span class="t" id="t63" style="left:159.62px;top:770.00px;font-size:18px;line-height:22.5px;color:#161513;letter-spacing:-0.063px;">Goods</span>
<span class="t" id="t64" style="left:351.52px;top:770.00px;font-size:18px;line-height:22.5px;color:#161513;letter-spacing:0.133px;">Liquid Soap</span>
<span class="t" id="t65" style="left:657.58px;top:770.00px;font-size:18px;line-height:22.5px;color:#161513;letter-spacing:0.009px;width:268.42px;overflow:hidden;">Liquid Soap for Restrooms updated</span>
<span class="t" id="t66" style="left:946.10px;top:770.00px;font-size:18px;line-height:22.5px;color:#161513;transform:scaleX(0.9162);transform-origin:0 0;width:187.62px;overflow:hidden;">zPOR-PRC_QA-BI-Category</span>
<span class="t" id="t67" style="left:1138.58px;top:770.00px;font-size:18px;line-height:22.5px;color:#161513;letter-spacing:-0.124px;">Gallon</span>
<span class="t" id="t68" style="left:1417.45px;top:770.00px;font-size:18px;line-height:22.5px;color:#161513;letter-spacing:-0.243px;transform:scaleX(1.0700);transform-origin:0 0;">12.0000</span>
</div>
<svg class="a" style="left:0;top:0;z-index:10" width="1" height="1"><path d="M1030.4 689.6 L1030.4 712.4 L1035.6 708.1 L1039.2 715.5 L1043.8 713.5 L1040.5 707.3 L1047.6 707 Z" fill="#ffffff" stroke="#1a1a1a" stroke-width="1.0" stroke-linejoin="round"/></svg>
</body></html>
